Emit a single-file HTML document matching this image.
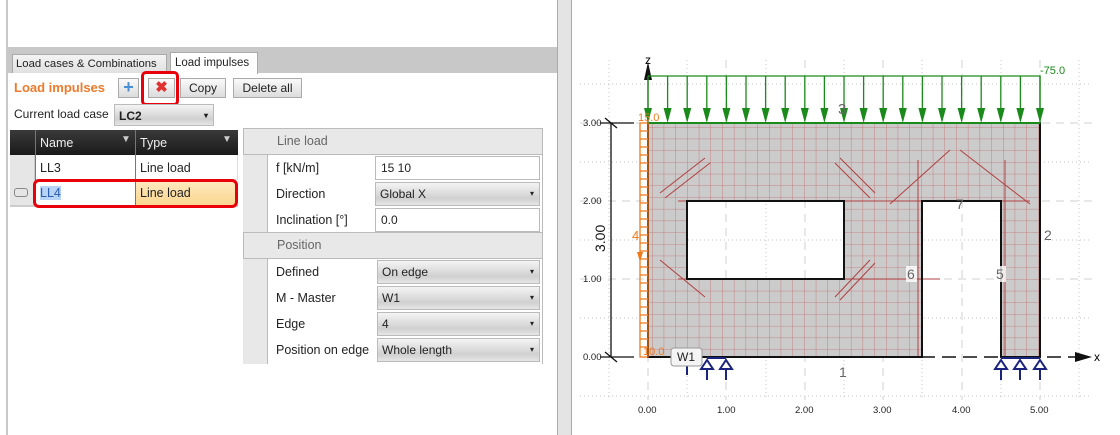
<!DOCTYPE html>
<html><head><meta charset="utf-8"><style>
*{box-sizing:border-box;margin:0;padding:0}
body{width:1120px;height:435px;overflow:hidden;background:#fff;font-family:"Liberation Sans",sans-serif;font-size:12px;color:#222;position:relative}
.a{position:absolute;white-space:nowrap}
.btn{position:absolute;border:1px solid #aaa;background:linear-gradient(#fafafa,#dcdcdc);font-size:12px;text-align:center;line-height:18px}
.dd{position:absolute;border:1px solid #bbb;background:linear-gradient(#f4f4f4,#d0d0d0 70%,#e6e6e6);padding-left:4px;line-height:22px;font-size:12px}
.dd:after{content:"▾";position:absolute;right:5px;top:0;font-size:8px}
.inp{position:absolute;border:1px solid #bbb;background:#fff;padding-left:5px;line-height:22px}
.lbl{position:absolute;left:276px;font-size:12.5px;white-space:nowrap}
</style></head><body>
<div class="a" style="left:6px;top:0;width:2px;height:435px;background:#c8c8c8"></div>
<div class="a" style="left:557px;top:0;width:15px;height:435px;background:#e4e4e4;border-left:1px solid #aaa;border-right:1px solid #aaa"></div>
<div class="a" style="left:8px;top:47px;width:549px;height:26px;background:#c8c8c8"></div>
<div class="a" style="left:12px;top:54px;width:155px;height:19px;background:linear-gradient(#f4f4f4,#e0e0e0);border:1px solid #aaa;border-bottom:none;line-height:18px;padding-left:3px;font-size:11.3px">Load cases &amp; Combinations</div>
<div class="a" style="left:170px;top:52px;width:88px;height:22px;background:#fff;border:1px solid #aaa;border-bottom:none;line-height:20px;padding-left:4px;font-size:11.5px">Load impulses</div>
<div class="a" style="left:14px;top:80px;color:#f07a2a;font-weight:bold;font-size:13px">Load impulses</div>
<div class="btn" style="left:118px;top:78px;width:21px;height:20px;color:#4a8fd6;font-weight:bold;font-size:18px;line-height:17px">+</div>
<div class="btn" style="left:148px;top:78px;width:27px;height:20px;color:#e03030;font-weight:bold;font-size:15px">✖</div>
<div class="a" style="left:141px;top:71px;width:38px;height:35px;border:3px solid #e8000b;border-radius:5px"></div>
<div class="btn" style="left:180px;top:78px;width:46px;height:20px">Copy</div>
<div class="btn" style="left:233px;top:78px;width:69px;height:20px">Delete all</div>
<div class="a" style="left:14px;top:107px;font-size:12px">Current load case</div>
<div class="dd" style="left:114px;top:104px;width:100px;height:22px;font-weight:bold">LC2</div>
<div class="a" style="left:10px;top:130px;width:228px;height:25px;background:linear-gradient(#3a3a3a,#1a1a1a)"></div>
<div class="a" style="left:35px;top:130px;width:1px;height:75px;background:#777"></div>
<div class="a" style="left:135px;top:130px;width:1px;height:75px;background:#777"></div>
<div class="a" style="left:40px;top:136px;color:#eee;font-size:12.5px">Name</div>
<div class="a" style="left:140px;top:136px;color:#eee;font-size:12.5px">Type</div>
<div class="a" style="left:121px;top:134px;color:#ccc;font-size:10px">▼</div>
<div class="a" style="left:222px;top:134px;color:#ccc;font-size:10px">▼</div>
<div class="a" style="left:10px;top:155px;width:25px;height:50px;background:#e6e6e6;border-right:1px solid #ccc"></div>
<div class="a" style="left:36px;top:155px;width:202px;height:25px;border-bottom:1px solid #ddd;border-right:1px solid #ddd"></div>
<div class="a" style="left:40px;top:161px;font-size:12.5px">LL3</div>
<div class="a" style="left:140px;top:161px;font-size:12.5px">Line load</div>
<div class="a" style="left:136px;top:181px;width:101px;height:24px;background:linear-gradient(#fde9bf,#fbd690)"></div>
<div class="a" style="left:40px;top:186px;font-size:12.5px;background:#b7d3f5;color:#2a5db0">LL4</div>
<div class="a" style="left:140px;top:186px;font-size:12.5px">Line load</div>
<div class="a" style="left:14px;top:188px;width:14px;height:9px;border:1px solid #888;border-radius:3px"></div>
<div class="a" style="left:10px;top:205px;width:228px;height:2px;background:#ccc"></div>
<div class="a" style="left:33px;top:179px;width:205px;height:29px;border:3px solid #e8000b;border-radius:6px"></div>
<div class="a" style="left:243px;top:128px;width:300px;height:236px;border:1px solid #bbb;border-bottom:none;background:#fff"></div>
<div class="a" style="left:243px;top:155px;width:25px;height:209px;background:#e8e8e8;border-right:1px solid #bbb"></div>
<div class="a" style="left:243px;top:128px;width:300px;height:27px;background:#e8e8e8;border:1px solid #bbb;color:#666;padding-left:33px;line-height:25px;font-size:12.5px">Line load</div>
<div class="a" style="left:243px;top:232px;width:300px;height:27px;background:#e8e8e8;border:1px solid #bbb;color:#666;padding-left:33px;line-height:25px;font-size:12.5px">Position</div>
<div class="lbl" style="top:161px">f [kN/m]</div>
<div class="inp" style="left:375px;top:156px;width:165px;height:24px">15 10</div>
<div class="lbl" style="top:187px">Direction</div>
<div class="dd" style="left:375px;top:182px;width:165px;height:24px">Global X</div>
<div class="lbl" style="top:213px">Inclination [°]</div>
<div class="inp" style="left:375px;top:208px;width:165px;height:24px">0.0</div>
<div class="lbl" style="top:265px">Defined</div>
<div class="dd" style="left:377px;top:260px;width:163px;height:24px">On edge</div>
<div class="lbl" style="top:291px">M - Master</div>
<div class="dd" style="left:377px;top:286px;width:163px;height:24px">W1</div>
<div class="lbl" style="top:317px">Edge</div>
<div class="dd" style="left:377px;top:312px;width:163px;height:24px">4</div>
<div class="lbl" style="top:343px">Position on edge</div>
<div class="dd" style="left:377px;top:338px;width:163px;height:24px">Whole length</div>

<svg class="a" style="left:0;top:0" width="1120" height="435" font-family="Liberation Sans, sans-serif">
<defs>
<pattern id="mesh" width="11.7" height="11.7" patternUnits="userSpaceOnUse" x="652" y="127">
<path d="M0 0V11.7M0 0H11.7" stroke="#c05050" stroke-width="0.8" fill="none"/>
</pattern>
<clipPath id="wc"><path clip-rule="evenodd" d="M648 123H1040V357H1001V201H922V357H648Z M687 201H844V279H687Z"/></clipPath>
<g id="ga"><line x1="0" y1="76" x2="0" y2="110" stroke="#1a8a1a" stroke-width="1.3"/><path d="M-4 108L4 108L0 123Z" fill="#1a8a1a"/></g>
<g id="sa"><line x1="0" y1="362" x2="0" y2="380" stroke="#1a237e" stroke-width="2"/><path d="M-6 369L0 360L6 369Z" fill="#fff" stroke="#1a237e" stroke-width="2"/></g>
</defs>
<g stroke="#c4c4c4" stroke-dasharray="1 3" stroke-width="1">
<line x1="580" y1="84" x2="1090" y2="84"/><line x1="580" y1="162" x2="1090" y2="162"/><line x1="580" y1="240" x2="1090" y2="240"/><line x1="580" y1="318" x2="1090" y2="318"/><line x1="580" y1="396" x2="1090" y2="396"/>
<line x1="609" y1="60" x2="609" y2="400"/><line x1="687" y1="60" x2="687" y2="400"/><line x1="766" y1="60" x2="766" y2="400"/><line x1="844" y1="60" x2="844" y2="400"/><line x1="922" y1="60" x2="922" y2="400"/><line x1="1001" y1="60" x2="1001" y2="400"/><line x1="1079" y1="60" x2="1079" y2="400"/>
</g>
<g stroke="#d0d0d0" stroke-dasharray="8 6" stroke-width="1">
<line x1="580" y1="123" x2="1095" y2="123"/><line x1="580" y1="201" x2="1095" y2="201"/><line x1="580" y1="279" x2="1095" y2="279"/>
<line x1="648" y1="60" x2="648" y2="400"/><line x1="726" y1="60" x2="726" y2="400"/><line x1="805" y1="60" x2="805" y2="400"/><line x1="883" y1="60" x2="883" y2="400"/><line x1="962" y1="60" x2="962" y2="400"/><line x1="1040" y1="60" x2="1040" y2="400"/>
</g>
<g clip-path="url(#wc)"><rect x="648" y="123" width="392" height="234" fill="#cbcbcb"/><rect x="648" y="123" width="392" height="234" fill="url(#mesh)" opacity="0.75"/></g>
<g stroke="#b04040" stroke-width="1" fill="none">
<path d="M678 201H940M678 279H940M660 193L705 158M665 198L710 163M840 158L875 193M835 163L870 198M660 260L705 297M835 297L870 260M840 300L875 263M890 204L950 150M960 150L1030 204M895 201H1030M918 160V357M1005 160V357"/>
</g>
<g fill="none" stroke="#111" stroke-width="2">
<path d="M648 123H1040V357H1001V201H922V357H648Z"/><rect x="687" y="201" width="157" height="78"/>
</g>
<line x1="648" y1="357" x2="1085" y2="357" stroke="#111" stroke-width="1.5" stroke-dasharray="14 7"/>
<path d="M1075 352L1092 357L1075 362Z" fill="#111"/>
<text x="1094" y="361" font-size="12">x</text>
<line x1="648" y1="357" x2="648" y2="70" stroke="#111" stroke-width="1.2"/>
<path d="M644 80L648 62L652 80Z" fill="#111"/>
<text x="645" y="64" font-size="12">z</text>
<path d="M648 76H1040V123H648" fill="none" stroke="#1a8a1a" stroke-width="1.3"/>
<use href="#ga" x="648"/><use href="#ga" x="667.6"/><use href="#ga" x="687.2"/><use href="#ga" x="706.8"/><use href="#ga" x="726.4"/><use href="#ga" x="746"/><use href="#ga" x="765.6"/><use href="#ga" x="785.2"/><use href="#ga" x="804.8"/><use href="#ga" x="824.4"/><use href="#ga" x="844"/><use href="#ga" x="863.6"/><use href="#ga" x="883.2"/><use href="#ga" x="902.8"/><use href="#ga" x="922.4"/><use href="#ga" x="942"/><use href="#ga" x="961.6"/><use href="#ga" x="981.2"/><use href="#ga" x="1000.8"/><use href="#ga" x="1020.4"/><use href="#ga" x="1040"/>
<line x1="648" y1="123" x2="1040" y2="123" stroke="#1a8a1a" stroke-width="2"/>
<text x="1040" y="74" font-size="11" fill="#1a8a1a">-75.0</text>
<text x="838" y="114" font-size="15" fill="#666">3</text>
<g stroke="#f07a1a" stroke-width="1.3" fill="none">
<rect x="640" y="123" width="8" height="234"/>
<path d="M640 131H648M640 139H648M640 147H648M640 155H648M640 163H648M640 171H648M640 179H648M640 187H648M640 195H648M640 203H648M640 211H648M640 219H648M640 227H648M640 235H648M640 243H648M640 251H648M640 259H648M640 267H648M640 275H648M640 283H648M640 291H648M640 299H648M640 307H648M640 315H648M640 323H648M640 331H648M640 339H648M640 347H648"/>
</g>
<path d="M640 245V258" stroke="#f07a1a"/><path d="M637 252L643 252L640 262Z" fill="#f07a1a"/>
<text x="638" y="121" font-size="11" fill="#f07a1a">15.0</text>
<text x="643" y="355" font-size="11" fill="#f07a1a">10.0</text>
<text x="632" y="240" font-size="13" fill="#f07a1a">4</text>
<text x="1044" y="240" font-size="14" fill="#666">2</text>
<rect x="906" y="266" width="11" height="16" fill="#fff" opacity=".8"/><text x="907" y="279" font-size="14" fill="#666">6</text>
<rect x="995" y="266" width="11" height="16" fill="#fff" opacity=".8"/><text x="996" y="279" font-size="14" fill="#666">5</text>
<text x="956" y="209" font-size="14" fill="#666">7</text>
<text x="839" y="377" font-size="14" fill="#666">1</text>
<line x1="687" y1="362" x2="687" y2="375" stroke="#1a237e" stroke-width="2"/>
<use href="#sa" x="707"/><use href="#sa" x="726"/><use href="#sa" x="1001"/><use href="#sa" x="1020"/><use href="#sa" x="1040"/>
<line x1="707" y1="358" x2="726" y2="358" stroke="#1a237e" stroke-width="2"/><line x1="1001" y1="358" x2="1040" y2="358" stroke="#1a237e" stroke-width="2"/>
<rect x="671" y="348" width="31" height="18" rx="3" fill="#f4f4f4" stroke="#999"/>
<text x="677" y="361" font-size="12" fill="#222">W1</text>
<line x1="611" y1="123" x2="611" y2="357" stroke="#111" stroke-width="1.3"/>
<path d="M605 118L617 128M605 352L617 362M600 123H634M600 357H634" stroke="#111" stroke-width="1.3"/>
<text transform="translate(605,252) rotate(-90)" font-size="14" fill="#111">3.00</text>
<g font-size="9.5" fill="#222">
<text x="583" y="126">3.00</text><text x="583" y="204">2.00</text><text x="583" y="282">1.00</text><text x="583" y="360">0.00</text>
<text x="638" y="413">0.00</text><text x="717" y="413">1.00</text><text x="795" y="413">2.00</text><text x="873" y="413">3.00</text><text x="952" y="413">4.00</text><text x="1030" y="413">5.00</text>
</g>
</svg>
</body></html>
